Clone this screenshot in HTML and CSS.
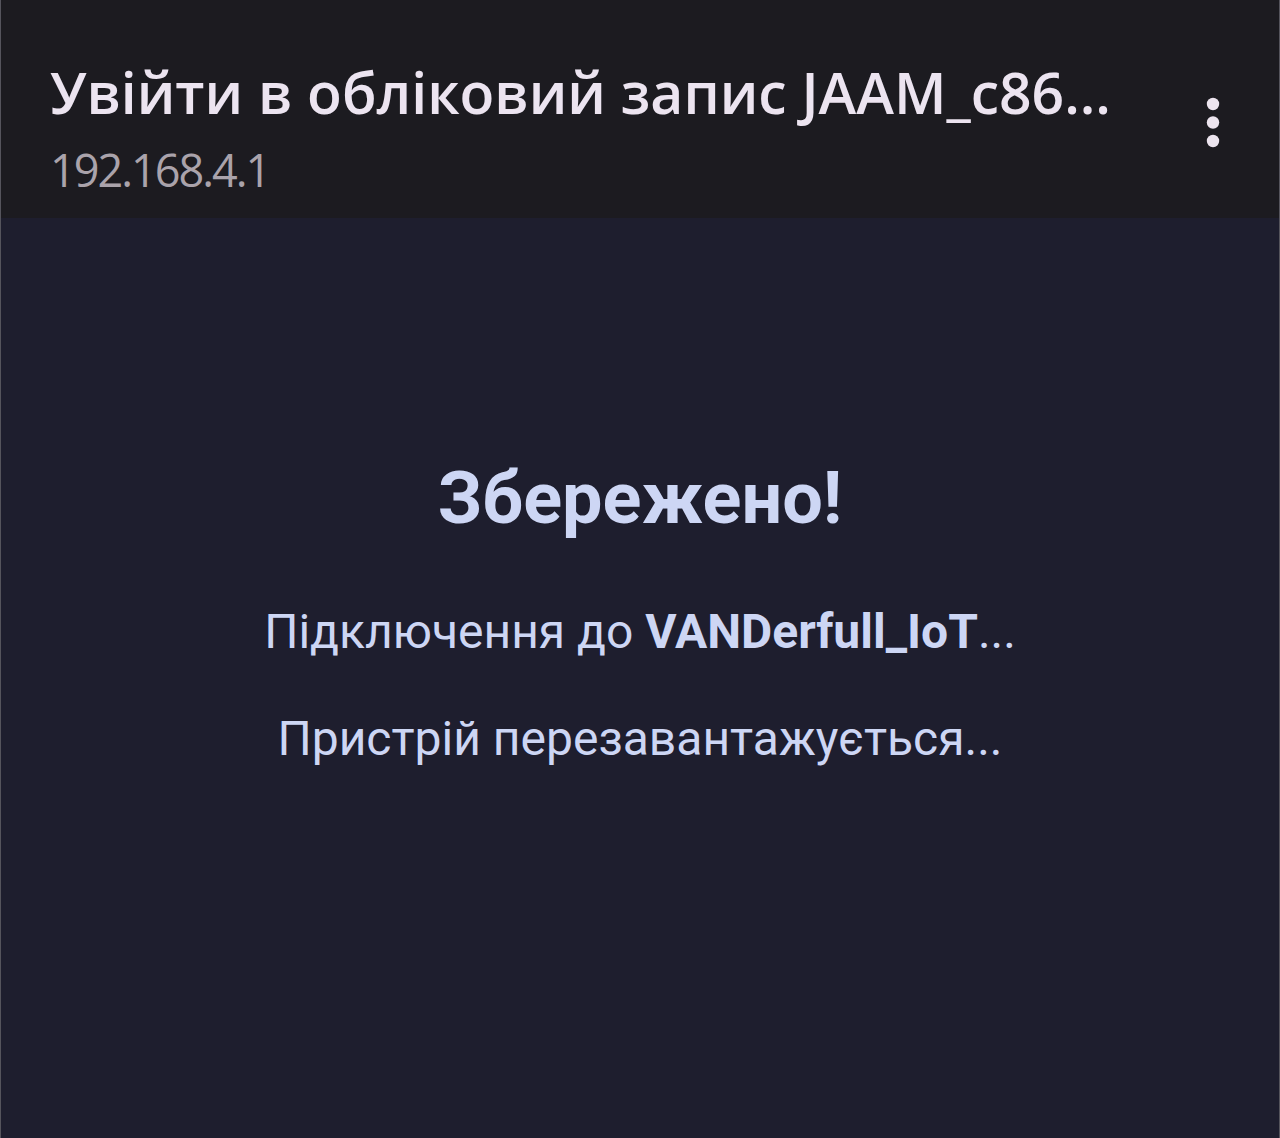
FILE: index.html
```html
<!DOCTYPE html>
<html lang="uk">
<head>
<meta charset="utf-8">
<title>Збережено</title>
<link rel="stylesheet" href="styles.css">
</head>
<body>
<div class="screen">
  <header class="topbar">
    <div class="titles">
      <div class="title">Увійти в обліковий запис JAAM_c86...</div>
      <div class="url">192.168.4.1</div>
    </div>
    <div class="menu" aria-label="menu">
      <svg width="16" height="52" viewBox="0 0 16 52"><circle cx="8" cy="7" r="6.2" fill="#ece4ee"/><circle cx="8" cy="25.5" r="6.2" fill="#ece4ee"/><circle cx="8" cy="44" r="6.2" fill="#ece4ee"/></svg>
    </div>
  </header>
  <main class="content">
    <h1 class="heading">Збережено!</h1>
    <p class="line">Підключення до <b>VANDerfull_IoT</b>...</p>
    <p class="line">Пристрій перезавантажується...</p>
  </main>
</div>
</body>
</html>
```
FILE: styles.css
```css
html, body { margin: 0; padding: 0; }
body { background: #1e1e2e; font-family: Roboto, "Noto Sans", sans-serif; }
.screen {
  width: 1280px; height: 1138px; display: flex; flex-direction: column;
  border-left: 1px solid #55545c; border-right: 1px solid #55545c; box-sizing: border-box;
  background: #1e1e2e;
}
.topbar {
  height: 218px; background: #1c1b20; display: flex; align-items: flex-start;
  padding: 0 58px 0 49px; box-sizing: border-box; flex-shrink: 0;
}
.titles { flex: 1; padding-top: 60px; min-width: 0; }
.title {
  font-family: "Open Sans", Roboto, sans-serif; font-weight: 600; font-size: 57px;
  color: #ece4f0; line-height: 64px; white-space: nowrap;
}
.url {
  font-family: "Open Sans", Roboto, sans-serif; font-weight: 400; font-size: 45px;
  color: #aaa3ab; line-height: 56px; margin-top: 18px; letter-spacing: -2px;
}
.menu { padding-top: 97px; }
.menu svg { display: block; }
.content {
  flex: 1; display: flex; flex-direction: column; align-items: center;
  padding-top: 241px; color: #cdd6f4;
}
.heading { margin: 0; font-size: 72px; font-weight: 700; line-height: 80px; }
.line { margin: 0; font-size: 48px; line-height: 56px; font-weight: 400; }
.heading + .line { margin-top: 65px; }
.line + .line { margin-top: 51px; }
.line b { font-weight: 700; }
```
